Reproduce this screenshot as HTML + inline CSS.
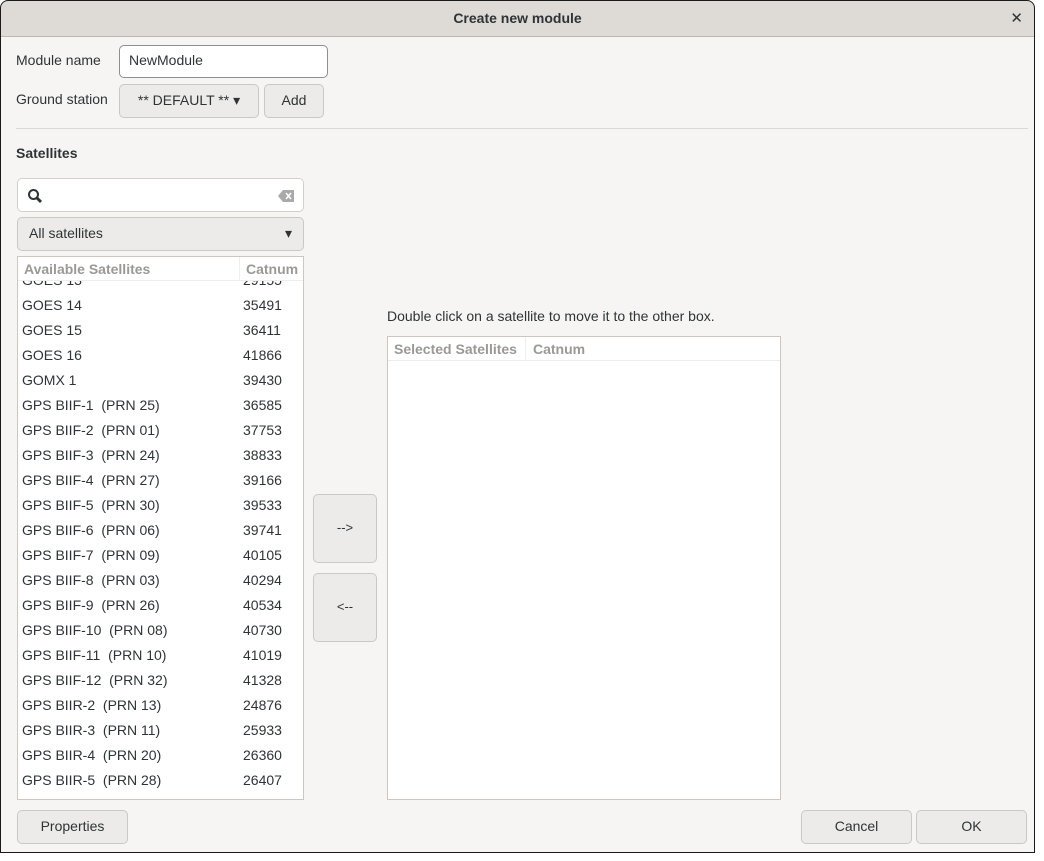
<!DOCTYPE html>
<html><head><style>
*{box-sizing:border-box;margin:0;padding:0}
body{width:1044px;height:861px;background:#fff;font-family:"Liberation Sans","DejaVu Sans",sans-serif;font-size:14px;color:#2e3436;position:relative;overflow:hidden}
.win{position:absolute;left:0;top:0;width:1035px;height:853px;border-radius:8px 8px 0 0;background:#f6f5f4;overflow:hidden}
.frame{position:absolute;left:0;top:0;width:1035px;height:853px;border:1px solid #1a1a1a;border-radius:8px 8px 0 0;pointer-events:none}
.title{position:absolute;left:0;top:0;right:0;height:37px;background:#dedad6;border-bottom:1px solid #bfb8b1;text-align:center;line-height:37px;font-weight:bold;font-size:14px}
.x{position:absolute;right:12px;top:0;font-size:15px;font-weight:bold}
.a{position:absolute}
.btn{position:absolute;border:1px solid #cdc7c2;border-radius:5px;background:#edebe9;text-align:center;color:#2e3436}
.lbl{position:absolute;font-size:14px}
.list{position:absolute;background:#fff;border:1px solid #cdc7c2;overflow:hidden}
.hdr{position:absolute;top:0;left:0;right:0;height:24px;border-bottom:1px solid #eee;color:#9a9996;font-weight:bold;font-size:14px;line-height:24px;background:#fff}
.row{position:absolute;left:4px;height:25px;line-height:25px;width:290px}
.row span{position:absolute;left:221px}
</style></head><body>
<div class="win">
<div class="title">Create new module<span class="x">✕</span></div>
<div class="lbl" style="left:16px;top:52px">Module name</div>
<div class="a" style="left:119px;top:45px;width:209px;height:33px;border:1px solid #8e8e8e;border-radius:5px;background:#fff;padding:6px 9px">NewModule</div>
<div class="lbl" style="left:16px;top:91px">Ground station</div>
<div class="btn" style="left:119px;top:84px;width:140px;height:34px;line-height:31px">** DEFAULT ** ▾</div>
<div class="btn" style="left:264px;top:84px;width:60px;height:34px;line-height:31px">Add</div>
<div class="a" style="left:16px;top:128px;width:1012px;height:1px;background:#dcd9d5"></div>
<div class="lbl" style="left:16px;top:145px;font-weight:bold">Satellites</div>
<div class="a" style="left:17px;top:178px;width:287px;height:34px;border:1px solid #d5d0cc;border-radius:5px;background:#fff">
<svg style="position:absolute;left:9px;top:9px" width="16" height="16" viewBox="0 0 16 16"><circle cx="6.5" cy="6.5" r="4.5" fill="none" stroke="#2e3436" stroke-width="2"/><path d="M10 10l4 4" stroke="#2e3436" stroke-width="3"/></svg>
<svg style="position:absolute;right:9px;top:11px" width="16" height="12" viewBox="0 0 16 12"><path d="M5 0h11v12H5L0 6z" fill="#aaa"/><path d="M8 3l5 6M13 3l-5 6" stroke="#fff" stroke-width="1.5"/></svg>
</div>
<div class="btn" style="left:17px;top:217px;width:287px;height:34px;line-height:31px;text-align:left;padding-left:11px">All satellites<span style="position:absolute;right:11px">▾</span></div>
<div class="list" style="left:17px;top:256px;width:287px;height:544px">
<div class="row" style="top:11px">GOES 13<span>29155</span></div>
<div class="row" style="top:36px">GOES 14<span>35491</span></div>
<div class="row" style="top:61px">GOES 15<span>36411</span></div>
<div class="row" style="top:86px">GOES 16<span>41866</span></div>
<div class="row" style="top:111px">GOMX 1<span>39430</span></div>
<div class="row" style="top:136px">GPS BIIF-1 &nbsp;(PRN 25)<span>36585</span></div>
<div class="row" style="top:161px">GPS BIIF-2 &nbsp;(PRN 01)<span>37753</span></div>
<div class="row" style="top:186px">GPS BIIF-3 &nbsp;(PRN 24)<span>38833</span></div>
<div class="row" style="top:211px">GPS BIIF-4 &nbsp;(PRN 27)<span>39166</span></div>
<div class="row" style="top:236px">GPS BIIF-5 &nbsp;(PRN 30)<span>39533</span></div>
<div class="row" style="top:261px">GPS BIIF-6 &nbsp;(PRN 06)<span>39741</span></div>
<div class="row" style="top:286px">GPS BIIF-7 &nbsp;(PRN 09)<span>40105</span></div>
<div class="row" style="top:311px">GPS BIIF-8 &nbsp;(PRN 03)<span>40294</span></div>
<div class="row" style="top:336px">GPS BIIF-9 &nbsp;(PRN 26)<span>40534</span></div>
<div class="row" style="top:361px">GPS BIIF-10 &nbsp;(PRN 08)<span>40730</span></div>
<div class="row" style="top:386px">GPS BIIF-11 &nbsp;(PRN 10)<span>41019</span></div>
<div class="row" style="top:411px">GPS BIIF-12 &nbsp;(PRN 32)<span>41328</span></div>
<div class="row" style="top:436px">GPS BIIR-2 &nbsp;(PRN 13)<span>24876</span></div>
<div class="row" style="top:461px">GPS BIIR-3 &nbsp;(PRN 11)<span>25933</span></div>
<div class="row" style="top:486px">GPS BIIR-4 &nbsp;(PRN 20)<span>26360</span></div>
<div class="row" style="top:511px">GPS BIIR-5 &nbsp;(PRN 28)<span>26407</span></div>
<div class="hdr"><span style="position:absolute;left:6px">Available Satellites</span><span style="position:absolute;left:221px;top:0;bottom:0;border-left:1px solid #eee;padding-left:6px">Catnum</span></div>
</div>
<div class="btn" style="left:313px;top:494px;width:64px;height:69px;line-height:66px;font-size:13px">--&gt;</div>
<div class="btn" style="left:313px;top:573px;width:64px;height:69px;line-height:66px;font-size:13px">&lt;--</div>
<div class="lbl" style="left:387px;top:308px">Double click on a satellite to move it to the other box.</div>
<div class="list" style="left:387px;top:336px;width:394px;height:464px">
<div class="hdr"><span style="position:absolute;left:6px">Selected Satellites</span><span style="position:absolute;left:137px;top:0;bottom:0;border-left:1px solid #eee;padding-left:7px">Catnum</span></div>
</div>
<div class="btn" style="left:17px;top:810px;width:111px;height:34px;line-height:31px">Properties</div>
<div class="btn" style="left:801px;top:810px;width:111px;height:34px;line-height:31px">Cancel</div>
<div class="btn" style="left:916px;top:810px;width:111px;height:34px;line-height:31px">OK</div>
</div>
<div class="frame"></div>
</body></html>
